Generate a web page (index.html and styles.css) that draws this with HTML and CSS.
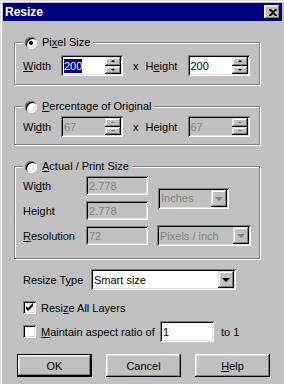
FILE: index.html
```html
<!DOCTYPE html>
<html lang="en">

<head>
    <meta charset="UTF-8">
    <title>Resize</title>
    <link rel="stylesheet" href="styles.css">
</head>

<body>
    <div class="window">
        <div class="titlebar">
            <span class="title">Resize</span>
            <span class="close">
                <svg width="8" height="7" viewBox="0 0 8 7"><path d="M0 0h2l2 2 2-2h2v1L5 3.5 8 6v1H6L4 5 2 7H0V6l3-2.5L0 1z" fill="#000"/></svg>
            </span>
        </div>

        <div class="content">
            <fieldset class="group group-pixel">
                <legend><span class="radio on"></span><span>Pi<u>x</u>el Size</span></legend>
                <div class="dims">
                    <label class="lbl-w"><u>W</u>idth</label>
                    <div class="edit">
                        <span class="val"><span class="sel">200</span></span>
                        <span class="spinner"><span class="sbtn up"></span><span class="sbtn down"></span></span>
                    </div>
                    <span class="times">x</span>
                    <label class="lbl-h">H<u>e</u>ight</label>
                    <div class="edit">
                        <span class="val">200</span>
                        <span class="spinner"><span class="sbtn up"></span><span class="sbtn down"></span></span>
                    </div>
                </div>
            </fieldset>

            <fieldset class="group group-percent">
                <legend><span class="radio"></span><span><u>P</u>ercentage of Original</span></legend>
                <div class="dims">
                    <label class="lbl-w">Wi<u>d</u>th</label>
                    <div class="edit off">
                        <span class="val">67</span>
                        <span class="spinner"><span class="sbtn up"></span><span class="sbtn down"></span></span>
                    </div>
                    <span class="times">x</span>
                    <label class="lbl-h">Hei<u>g</u>ht</label>
                    <div class="edit off">
                        <span class="val">67</span>
                        <span class="spinner"><span class="sbtn up"></span><span class="sbtn down"></span></span>
                    </div>
                </div>
            </fieldset>

            <fieldset class="group group-print">
                <legend><span class="radio"></span><span><u>A</u>ctual / Print Size</span></legend>
                <div class="print-grid">
                    <label class="r1">Wi<u>d</u>th</label>
                    <div class="edit off r1"><span class="val">2.778</span></div>
                    <div class="combo off units"><span class="val">Inches</span><span class="drop"></span></div>
                    <label class="r2">Hei<u>g</u>ht</label>
                    <div class="edit off r2"><span class="val">2.778</span></div>
                    <label class="r3"><u>R</u>esolution</label>
                    <div class="edit off r3"><span class="val">72</span></div>
                    <div class="combo off res r3"><span class="val">Pixels / inch</span><span class="drop"></span></div>
                </div>
            </fieldset>

            <div class="row type-row">
                <label class="type-label">Resize T<u>y</u>pe</label>
                <div class="combo type-combo"><span class="val">Smart size</span><span class="drop"></span></div>
            </div>

            <div class="row check-row">
                <span class="check on">
                    <svg width="9" height="9" viewBox="0 0 9 9"><path d="M1 3l2 2 5-5v3L3 8 1 6z" fill="#000"/></svg>
                </span>
                <span>Resi<u>z</u>e All Layers</span>
            </div>

            <div class="row aspect-row">
                <span class="check"></span>
                <span class="aspect-text"><u>M</u>aintain aspect ratio of</span>
                <div class="edit ratio"><span class="val">1</span></div>
                <span class="to-one">to 1</span>
            </div>

            <div class="buttons">
                <button class="default">OK</button>
                <button>Cancel</button>
                <button><u>H</u>elp</button>
            </div>
        </div>
    </div>
</body>

</html>
```

FILE: styles.css
```css
body {
    margin: 0;
    font-family: "Liberation Sans", Arial, sans-serif;
    font-size: 11px;
    color: #000;
    background: #c0c0c0;
}

.window {
    width: 284px;
    height: 384px;
    box-sizing: border-box;
    padding: 3px 2px 0 3px;
    background: #c0c0c0;
    box-shadow: inset 1px 1px #dfdfdf, inset 2px 2px #fff;
    overflow: hidden;
}

.titlebar {
    height: 18px;
    background: #000080;
    display: flex;
    align-items: center;
    justify-content: space-between;
    padding: 0 2px 0 2px;
}

.title {
    color: #fff;
    font-weight: bold;
    font-size: 12px;
}

.close {
    width: 16px;
    height: 14px;
    display: flex;
    align-items: center;
    justify-content: center;
    background: #c0c0c0;
    box-shadow: inset -1px -1px #000, inset 1px 1px #fff, inset -2px -2px #808080, inset 2px 2px #dfdfdf;
}

.close svg {
    margin: 0 0 0 1px;
}

.content {
    padding-left: 11px;
}

/* group boxes */
.group {
    width: 246px;
    box-sizing: border-box;
    margin: 15px 0 0 0;
    padding: 0 8px 7px 8px;
    border: 1px solid #808080;
    box-shadow: inset 1px 1px #fff, 1px 1px #fff;
}

.group legend {
    display: flex;
    align-items: center;
    gap: 5px;
    height: 13px;
    line-height: 13px;
    padding: 0 3px 0 2px;
    background: #c0c0c0;
}

.group-pixel {
    padding-bottom: 8px;
}

.group-pixel .dims {
    margin-top: 6px;
}

.group-percent .dims {
    margin-top: 3px;
}

.group-print {
    padding-bottom: 13px;
}

.radio {
    width: 12px;
    height: 12px;
    border-radius: 50%;
    background: #fff;
    box-shadow: inset 1px 1px #808080, inset -1px -1px #fff, inset 2px 2px #000, inset -2px -2px #dfdfdf;
    display: flex;
    align-items: center;
    justify-content: center;
}

.radio.on::after {
    content: "";
    width: 4px;
    height: 4px;
    border-radius: 50%;
    background: #000;
}

.dims {
    display: flex;
    align-items: center;
    height: 21px;
}

.lbl-w {
    width: 38px;
}

.lbl-h {
    width: 42px;
}

.times {
    margin: 0 7px 0 10px;
}

/* edits and combos */
.edit,
.combo {
    height: 21px;
    box-sizing: border-box;
    padding: 2px;
    display: flex;
    align-items: stretch;
    background: #fff;
    box-shadow: inset 1px 1px #808080, inset -1px -1px #fff, inset 2px 2px #000, inset -2px -2px #dfdfdf;
}

.dims .edit {
    width: 62px;
}

.edit .val,
.combo .val {
    flex: 1;
    display: flex;
    align-items: center;
    padding-left: 1px;
    white-space: nowrap;
    overflow: hidden;
}

.sel {
    background: #000080;
    color: #fff;
    line-height: 14px;
}

.edit.off,
.combo.off {
    background: #c0c0c0;
    color: #808080;
}

.spinner {
    width: 16px;
    display: flex;
    flex-direction: column;
}

.sbtn {
    flex: 1;
    display: flex;
    align-items: center;
    justify-content: center;
    background: #c0c0c0;
    box-shadow: inset -1px -1px #000, inset 1px 1px #dfdfdf, inset -2px -2px #808080, inset 2px 2px #fff;
}

.sbtn::after {
    content: "";
    border-left: 2px solid transparent;
    border-right: 2px solid transparent;
}

.sbtn.up::after {
    border-bottom: 2px solid #000;
}

.sbtn.down::after {
    border-top: 2px solid #000;
}

.off .sbtn.up::after {
    border-bottom-color: #808080;
}

.off .sbtn.down::after {
    border-top-color: #808080;
}

.drop {
    width: 16px;
    display: flex;
    align-items: center;
    justify-content: center;
    background: #c0c0c0;
    box-shadow: inset -1px -1px #000, inset 1px 1px #dfdfdf, inset -2px -2px #808080, inset 2px 2px #fff;
}

.drop::after {
    content: "";
    border-left: 4px solid transparent;
    border-right: 4px solid transparent;
    border-top: 4px solid #000;
    margin-top: 1px;
}

.off .drop::after {
    border-top-color: #808080;
}

/* print size grid */
.print-grid {
    margin-top: 3px;
    display: grid;
    grid-template-columns: 54px 62px 1fr;
    grid-template-rows: 19px 19px 19px;
    row-gap: 6px;
    column-gap: 9px;
    align-items: center;
}

.print-grid .edit {
    height: 19px;
}

.r1 {
    grid-row: 1;
}

.r2 {
    grid-row: 2;
}

.r3 {
    grid-row: 3;
}

.units {
    grid-column: 3;
    grid-row: 1 / 3;
    width: 71px;
    margin-left: 1px;
}

.res {
    grid-column: 3;
    width: 94px;
}

/* lower rows */
.row {
    display: flex;
    align-items: center;
    padding-left: 9px;
}

.type-row {
    margin-top: 10px;
}

.type-label {
    width: 68px;
}

.type-combo {
    width: 145px;
}

.check-row {
    margin-top: 11px;
    height: 13px;
}

.aspect-row {
    margin-top: 7px;
}

.check {
    width: 13px;
    height: 13px;
    box-sizing: border-box;
    margin-right: 5px;
    display: flex;
    align-items: center;
    justify-content: center;
    background: #fff;
    box-shadow: inset 1px 1px #808080, inset -1px -1px #fff, inset 2px 2px #000, inset -2px -2px #dfdfdf;
}

.aspect-text {
    width: 119px;
}

.ratio {
    width: 54px;
}

.to-one {
    margin-left: 7px;
}

/* dialog buttons */
.buttons {
    display: flex;
    gap: 14px;
    margin: 12px 0 0 3px;
}

button {
    width: 75px;
    height: 23px;
    border: none;
    padding: 0;
    font: inherit;
    color: #000;
    background: #c0c0c0;
    box-shadow: inset -1px -1px #000, inset 1px 1px #fff, inset -2px -2px #808080, inset 2px 2px #dfdfdf;
}

button.default {
    box-shadow: inset 0 0 0 1px #000, inset -2px -2px #000, inset 2px 2px #fff, inset -3px -3px #808080, inset 3px 3px #dfdfdf;
}
```
